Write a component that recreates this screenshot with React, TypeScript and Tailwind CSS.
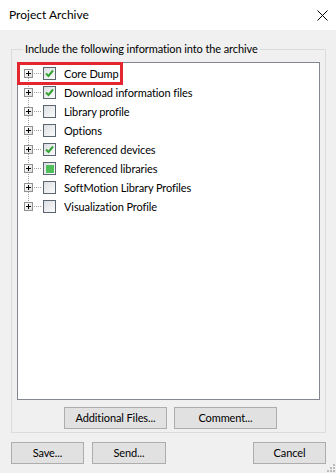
import React from "react";

const items: { label: string; state: "checked" | "unchecked" | "partial" }[] = [
  { label: "Core Dump", state: "checked" },
  { label: "Download information files", state: "checked" },
  { label: "Library profile", state: "unchecked" },
  { label: "Options", state: "unchecked" },
  { label: "Referenced devices", state: "checked" },
  { label: "Referenced libraries", state: "partial" },
  { label: "SoftMotion Library Profiles", state: "unchecked" },
  { label: "Visualization Profile", state: "unchecked" },
];

function PlusBox() {
  return (
    <div className="relative w-[9px] h-[9px] border border-[#919191] bg-gradient-to-br from-white to-[#dedede] flex items-center justify-center z-10">
      <svg width="7" height="7" viewBox="0 0 7 7">
        <rect x="1" y="3" width="5" height="1" fill="#000" />
        <rect x="3" y="1" width="1" height="5" fill="#000" />
      </svg>
    </div>
  );
}

function CheckBox({ state }: { state: "checked" | "unchecked" | "partial" }) {
  return (
    <div className="w-[13px] h-[13px] border border-[#5a6570] bg-gradient-to-br from-[#dcdfe3] to-[#fbfbfb] flex items-center justify-center">
      {state === "checked" && (
        <svg width="9" height="9" viewBox="0 0 9 9">
          <path d="M1 4.5 L3.5 7 L8 1.5" fill="none" stroke="#36a336" strokeWidth="2" />
        </svg>
      )}
      {state === "partial" && <div className="w-[8px] h-[8px] bg-[#4fbf5a]" />}
    </div>
  );
}

function Btn({ label, w }: { label: string; w: string }) {
  return (
    <button
      className={`${w} h-[22px] bg-[#e1e1e1] border border-[#adadad] text-[11px] tracking-[-0.1px] text-black flex items-center justify-center`}
    >
      {label}
    </button>
  );
}

export default function App() {
  return (
    <div
      className="w-[336px] h-[473px] bg-[#f0f0f0] flex flex-col relative text-black"
      style={{ fontFamily: 'Lato, "Noto Sans", sans-serif' }}
    >
      <div className="h-[30px] bg-white flex items-center justify-between pl-[9px] pr-[8px]">
        <span className="text-[12px]">Project Archive</span>
        <svg width="11" height="11" viewBox="0 0 11 11">
          <path d="M0.5 0.5 L10.5 10.5 M10.5 0.5 L0.5 10.5" stroke="#000" strokeWidth="1" />
        </svg>
      </div>
      <div className="px-[11px] pt-[11px] flex flex-col">
        <fieldset className="border border-[#dcdcdc] h-[392px] w-[314px] px-[5px] flex flex-col">
          <legend className="ml-[6px] px-[2px] text-[11px] tracking-[-0.1px] leading-[16px]">
            Include the following information into the archive
          </legend>
          <div className="mt-[5px] h-[338px] w-[303px] border border-[#828790] bg-white relative pt-[1px]">
            <div className="absolute left-[10px] top-[11px] h-[133px] border-l border-dotted border-[#a0a0a0]" />
            {items.map((it) => (
              <div key={it.label} className="h-[19px] flex items-center pl-[6px]">
                <PlusBox />
                <div className="w-[7px] ml-[1px] border-t border-dotted border-[#a0a0a0]" />
                <div className="ml-[2px]">
                  <CheckBox state={it.state} />
                </div>
                <span className="ml-[8px] text-[11px] tracking-[-0.1px] leading-[16px] whitespace-nowrap">
                  {it.label}
                </span>
              </div>
            ))}
            <div className="absolute -left-[1px] -top-[1px] w-[106px] h-[23px] border-[3px] border-[#e3262f]" />
          </div>
          <div className="mt-[7px] flex gap-[7px] pl-[47px]">
            <Btn label="Additional Files..." w="w-[103px]" />
            <Btn label="Comment..." w="w-[103px]" />
          </div>
        </fieldset>
        <div className="mt-[9px] flex">
          <Btn label="Save..." w="w-[73px]" />
          <div className="ml-[8px]">
            <Btn label="Send..." w="w-[74px]" />
          </div>
          <div className="ml-auto -mr-[1px]">
            <Btn label="Cancel" w="w-[73px]" />
          </div>
        </div>
      </div>
      <svg className="absolute right-[1px] bottom-[1px]" width="10" height="10" viewBox="0 0 10 10">
        {[
          [8, 0],
          [8, 3],
          [5, 3],
          [8, 6],
          [5, 6],
          [2, 6],
        ].map(([x, y], i) => (
          <rect key={i} x={x} y={y + 2} width="2" height="2" fill="#bcbcbc" />
        ))}
      </svg>
    </div>
  );
}
